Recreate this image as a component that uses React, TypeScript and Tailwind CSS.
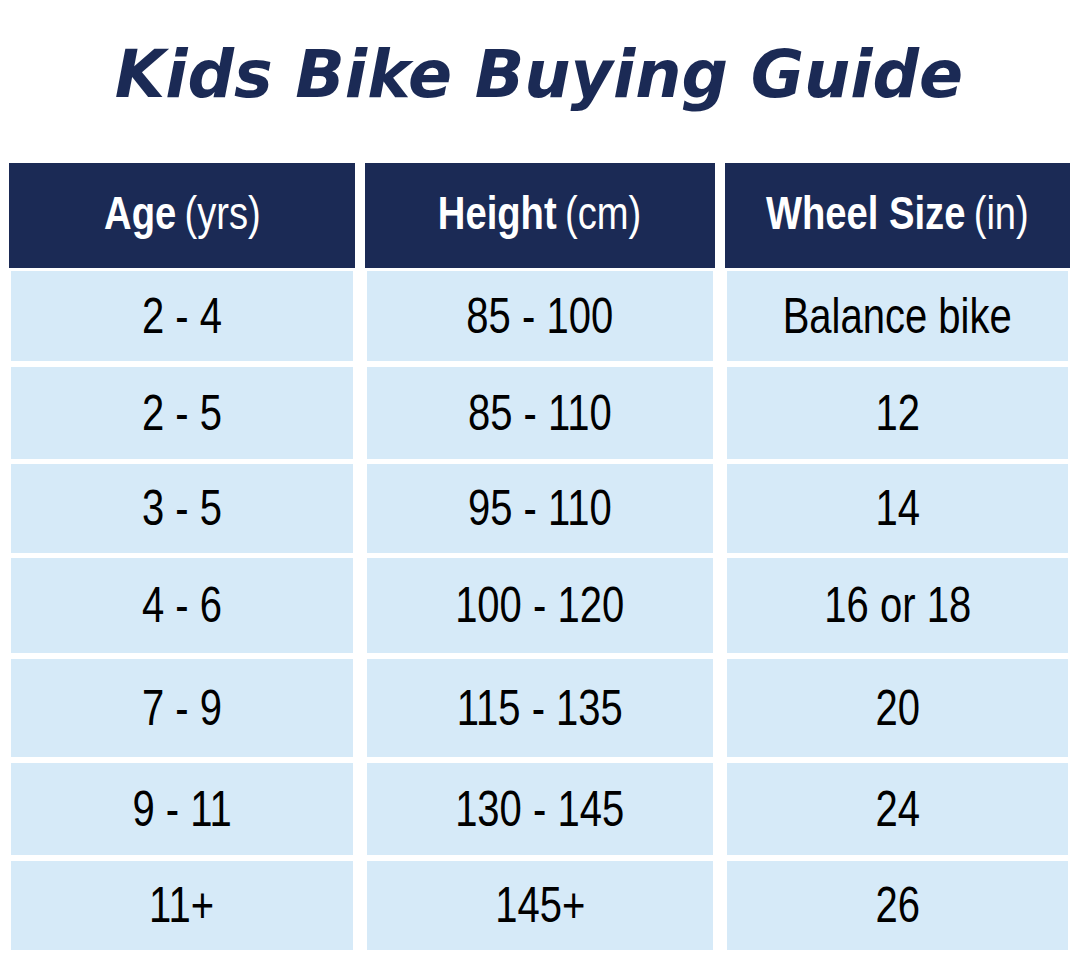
const rows = [
  { age: '2 - 4', height: '85 - 100', wheel: 'Balance bike', cls: 'mt-[3px] h-[90px]' },
  { age: '2 - 5', height: '85 - 110', wheel: '12', cls: 'mt-[6px] h-[92px]' },
  { age: '3 - 5', height: '95 - 110', wheel: '14', cls: 'mt-[5px] h-[89px]' },
  { age: '4 - 6', height: '100 - 120', wheel: '16 or 18', cls: 'mt-[5px] h-[95px]' },
  { age: '7 - 9', height: '115 - 135', wheel: '20', cls: 'mt-[6px] h-[98px]' },
  { age: '9 - 11', height: '130 - 145', wheel: '24', cls: 'mt-[6px] h-[92px]' },
  { age: '11+', height: '145+', wheel: '26', cls: 'mt-[6px] h-[89px]' },
]

// no narrow face installed, so squeeze Liberation Sans horizontally
const sans = { fontFamily: '"Liberation Sans", Arial, sans-serif' }

function Head({ bold, unit }: { bold: string; unit: string }) {
  return (
    <div className="flex h-[105px] items-center justify-center bg-[#1b2a55] pb-[4px] text-white" style={sans}>
      <span className="inline-block scale-x-[0.83] whitespace-nowrap text-[46px]">
        <span className="font-bold">{bold}</span>
        <span className="ml-[10px]">{unit}</span>
      </span>
    </div>
  )
}

function Cell({ text }: { text: string }) {
  return (
    <div className="px-[2px]">
      <div className="flex h-full items-center justify-center bg-[#d6eaf8] text-black" style={sans}>
        <span className="inline-block scale-x-[0.8] whitespace-nowrap text-[50px]">{text}</span>
      </div>
    </div>
  )
}

export default function App() {
  return (
    <div className="h-[967px] w-[1078px] bg-white">
      <h1
        className="flex h-[163px] justify-center pt-[36px] text-[65px] font-bold italic leading-[1.2] text-[#1b2a55]"
        style={{ fontFamily: '"DejaVu Sans", sans-serif' }}
      >
        Kids Bike Buying Guide
      </h1>
      <div className="pl-[9px]">
        <div className="grid grid-cols-[346px_350px_345px] gap-x-[10px]">
          <Head bold="Age" unit="(yrs)" />
          <Head bold="Height" unit="(cm)" />
          <Head bold="Wheel Size" unit="(in)" />
        </div>
        {rows.map((r) => (
          <div key={r.age} className={`grid grid-cols-[346px_350px_345px] gap-x-[10px] ${r.cls}`}>
            <Cell text={r.age} />
            <Cell text={r.height} />
            <Cell text={r.wheel} />
          </div>
        ))}
      </div>
    </div>
  )
}
